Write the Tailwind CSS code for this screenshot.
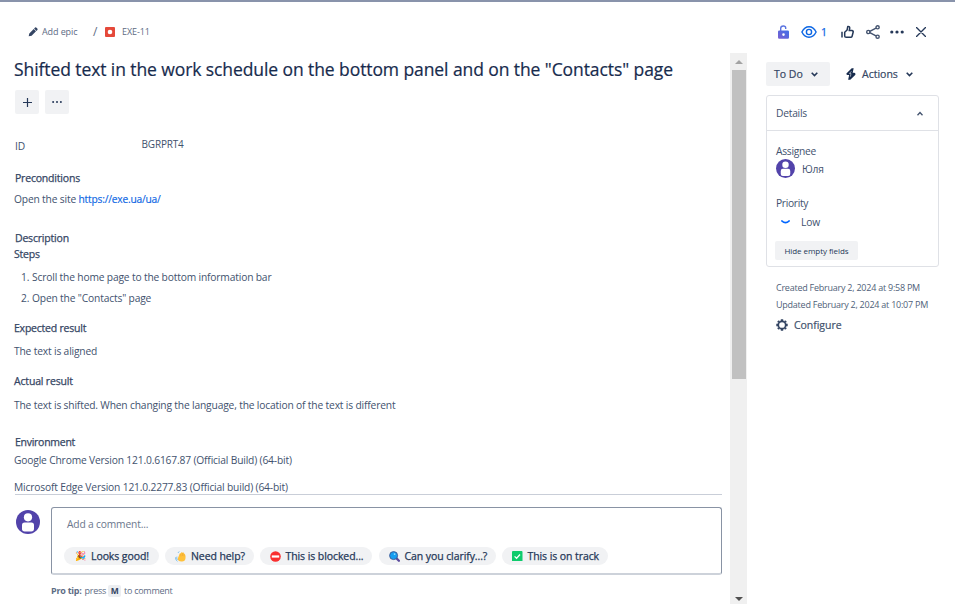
<!DOCTYPE html>
<html lang="en"><head><meta charset="utf-8"><title>EXE-11</title>
<script src="https://cdn.jsdelivr.net/npm/@tailwindcss/browser@4"></script></head>
<body class="h-[604px] w-[955px] overflow-hidden bg-white font-['Open_Sans','Noto_Sans',sans-serif] text-[10.25px] leading-4 tracking-[-0.165px] whitespace-nowrap text-[#42526e]">
<div class="flex h-[604px] border-t-2 border-[#8993ab]">
<div class="flex w-[747px] flex-col">
<header class="flex h-[51px] shrink-0 items-center pt-[9px] pl-[28px] text-[9px] tracking-[-0.1px] text-[#5e6c84]">
<svg class="mr-[4px] size-[10px] shrink-0" viewBox="0 0 10 10" fill="#344563"><path d="M.7 9.3 1.3 6.4 5.7 2 8 4.3 3.6 8.7ZM6.1 1.6 7.1.6Q7.8 0 8.5.7L9.3 1.5Q10 2.2 9.4 2.9L8.4 3.9Z"/></svg>
<span class="w-[36px]">Add epic</span>
<span class="ml-[15px] w-[5px] text-[12px]">/</span>
<svg class="mr-[7px] ml-[7px] size-[10px]" viewBox="0 0 10 10"><rect width="10" height="10" rx="1" fill="#e5493a"/><circle cx="5" cy="5" r="2.3" fill="#fff"/></svg>
<span>EXE-11</span>
</header>
<div class="flex min-h-0 flex-1 justify-between">
<main class="flex w-[722px] flex-col pl-[14px]">
<section class="h-[441px] shrink-0">
<h1 class="pt-[6px] text-[17.5px] leading-[20px] tracking-[-0.087px] text-[#172b4d] [-webkit-text-stroke:0.2px]">Shifted text in the work schedule on the bottom panel and on the "Contacts" page</h1>
<div class="mt-[11px] ml-px flex gap-[6px]">
<button class="grid size-6 place-items-center rounded-[2px] bg-[#f1f2f4]"><svg class="size-[9px]" viewBox="0 0 9 9" stroke="#253858" stroke-width="1.2"><path d="M4.5 0V9M0 4.5H9"/></svg></button>
<button class="grid size-6 place-items-center rounded-[2px] bg-[#f1f2f4]"><svg class="h-[2px] w-[10px]" viewBox="0 0 10 2" fill="#253858"><circle cx="1.1" cy="1" r="1"/><circle cx="5" cy="1" r="1"/><circle cx="8.9" cy="1" r="1"/></svg></button></div>
<dl class="mt-[22px] ml-px flex"><dt class="mt-[2px] w-[126.5px]">ID</dt><dd class="text-[10px]">BGRPRT4</dd></dl>
<h2 class="mt-[16px] ml-px text-[10.5px] tracking-[-0.195px] text-[#344563] [-webkit-text-stroke:0.25px]">Preconditions</h2>
<p class="mt-[5px]">Open the site <a class="tracking-[-0.22px] text-[#0c66e4] [-webkit-text-stroke:0.15px]">https://exe.ua/ua/</a></p>
<h2 class="mt-[23px] ml-px text-[10.5px] tracking-[-0.195px] text-[#344563] [-webkit-text-stroke:0.25px]">Description</h2>
<h2 class="text-[10.5px] tracking-[-0.195px] text-[#344563] [-webkit-text-stroke:0.25px]">Steps</h2>
<ol class="mt-[7px] ml-[7px] space-y-[5px]"><li class="flex"><span class="w-[11px]">1.</span>Scroll the home page to the bottom information bar</li><li class="flex"><span class="w-[11px]">2.</span>Open the "Contacts" page</li></ol>
<h2 class="mt-[14px] text-[10.5px] tracking-[-0.22px] text-[#344563] [-webkit-text-stroke:0.25px]">Expected result</h2>
<p class="mt-[7px]">The text is aligned</p>
<h2 class="mt-[14px] text-[10.5px] tracking-[-0.17px] text-[#344563] [-webkit-text-stroke:0.25px]">Actual result</h2>
<p class="mt-[8px]">The text is shifted. When changing the language, the location of the text is different</p>
<h2 class="mt-[21px] ml-px text-[10.5px] tracking-[-0.27px] text-[#344563] [-webkit-text-stroke:0.25px]">Environment</h2>
<p class="mt-[2px]">Google Chrome Version 121.0.6167.87 (Official Build) (64-bit)</p>
<p class="mt-[11px]">Microsoft Edge Version 121.0.2277.83 (Official build) (64-bit)</p>
</section>
<footer class="ml-px flex border-t border-[#c9ced8] pt-3 pl-px">
<svg class="mt-[3px] mr-[11px] size-6 shrink-0" viewBox="0 0 24 24"><circle cx="12" cy="12" r="12" fill="#5243aa"/><circle cx="12" cy="7.3" r="4.1" fill="#fff"/><rect x="6" y="12.4" width="12" height="9" rx="2.6" fill="#fff"/></svg>
<div class="flex-1">
<div class="h-[68px] rounded-[3px] border border-b-2 border-[#8993a4] border-b-[#cdd2da] pt-[8px] pl-[12px]">
<p class="pl-[3px] text-[#6b778c]">Add a comment...</p>
<div class="mt-[15px] flex gap-[6.5px] text-[10.5px] tracking-[-0.085px] text-[#253858] [-webkit-text-stroke:0.25px]">
<span class="flex h-[18px] w-[94.5px] items-center rounded-full bg-[#f1f2f4] pl-[11px]"><span class="w-[16px] text-[9px] tracking-normal">🎉</span>Looks good!</span>
<span class="flex h-[18px] w-[88.5px] items-center rounded-full bg-[#f1f2f4] pl-[10px]"><svg class="mr-[5px] size-[11px]" viewBox="0 0 11 11"><path d="M3.2 9.3Q1.9 7.5 3.2 6.4L4.6 2.8Q5 1.9 5.7 2.6L6.3 1.4Q7 .7 7.4 1.7L8.4 1.5Q9.2 1.6 9.1 2.6L10.2 3.7Q10.8 5 10.5 7.2 10.1 10.4 7 10.5 4.5 10.6 3.2 9.3Z" fill="#ffc13b"/><path d="M5.7 2.8 6 5.4M7.4 2 7.6 5M9 2.8 9.1 5.4" stroke="#eaa12b" stroke-width=".5" fill="none"/><path d="M.5 6.3Q.3 9.2 2.5 10.3M1.9 5.6Q1.3 7.7 2.4 8.9M4.4.5Q3.4.8 3.1 1.9" stroke="#67b5eb" stroke-width=".8" fill="none"/></svg>Need help?</span>
<span class="flex h-[18px] w-[112px] items-center rounded-full bg-[#f1f2f4] pl-[10px]"><svg class="mr-[4.5px] size-[11px]" viewBox="0 0 11 11"><circle cx="5.5" cy="5.5" r="5.3" fill="#f92f2f"/><rect x="1.8" y="4.4" width="7.4" height="2.2" fill="#fff"/></svg>This is blocked...</span>
<span class="flex h-[18px] w-[117px] items-center rounded-full bg-[#f1f2f4] pl-[10px]"><svg class="mr-[5px] size-[11px]" viewBox="0 0 11 11"><path d="M6.8 6.6 9.9 9.7" stroke="#5b4a9c" stroke-width="2.3" stroke-linecap="round"/><circle cx="4.6" cy="4.6" r="4" fill="#159df0" stroke="#3e5592" stroke-width=".9"/><circle cx="5.6" cy="3.1" r=".9" fill="#8fdcff"/></svg>Can you clarify...?</span>
<span class="flex h-[18px] w-[106px] items-center rounded-full bg-[#f1f2f4] pl-[10px]"><svg class="mr-[5px] size-[10.5px]" viewBox="0 0 11 11"><rect width="11" height="11" rx="1" fill="#0ecb6c"/><path d="M2.7 5.6 4.8 7.6 8.4 3.7" stroke="#fff" stroke-width="1.3" fill="none"/></svg>This is on track</span>
</div></div>
<p class="mt-[8px] flex text-[9px] tracking-[-0.25px] text-[#5e6c84]"><b class="mr-[3px] font-bold">Pro tip:</b>press<kbd class="mr-[3px] ml-[2px] mt-[2px] h-[12px] rounded-[2px] bg-[#eceef1] px-[2.5px] font-['Open_Sans'] text-[8.5px] leading-[12px] font-bold text-[#344563]">M</kbd>to comment</p>
</div></footer></main>
<div class="flex w-[17px] flex-col items-center justify-between bg-[#f0f0f0] pt-[7px] pb-[3px]">
<div class="flex flex-col items-center"><svg class="h-[4px] w-[8px]" viewBox="0 0 8 4" fill="#a3a3a3"><path d="M0 4 4 0 8 4Z"/></svg><div class="mt-[6px] h-[309px] w-[14px] bg-[#c1c1c1]"></div></div>
<svg class="h-[4px] w-[8px]" viewBox="0 0 8 4" fill="#505050"><path d="M0 0 4 4 8 0Z"/></svg>
</div></div></div>
<aside class="ml-[19px] w-[173px]">
<div class="flex h-[42px] items-center pt-[18px] pl-[12px]">
<svg class="h-[14px] w-[11px]" viewBox="0 0 11 14"><defs><linearGradient id="lk" x1="0" x2="1" y1="1" y2="0"><stop stop-color="#7a5fd0"/><stop offset="1" stop-color="#3f6fe8"/></linearGradient></defs><path d="M2.7 6V3.2Q2.7 1 5.3 1 7.7 1 7.7 3V4" fill="none" stroke="#5b74e0" stroke-width="1.4"/><path fill-rule="evenodd" d="M1.2 5.5H9.8Q11 5.5 11 6.7V12.5Q11 13.8 9.8 13.8H1.2Q0 13.8 0 12.5V6.7Q0 5.5 1.2 5.5ZM5.5 8.3A1.3 1.3 0 1 0 5.5 10.9 1.3 1.3 0 0 0 5.5 8.3Z" fill="url(#lk)"/></svg>
<svg class="ml-[12px] h-[12px] w-[16px]" viewBox="0 0 16 12" fill="none" stroke="#0c66e4" stroke-width="1.4"><path d="M.9 6Q3.4.8 8 .8T15.1 6Q12.6 11.2 8 11.2T.9 6Z"/><circle cx="8" cy="6" r="2.6"/></svg>
<span class="ml-[4px] w-[20px] text-[10.5px] text-[#0c66e4] [-webkit-text-stroke:0.25px]">1</span>
<svg class="h-[14px] w-[13px]" viewBox="0 0 13 14" fill="none" stroke="#253858" stroke-width="1.5" stroke-linejoin="round"><path d="M1 6.8V12.6M3.7 7.2 6.1 5 6.8 1.5Q8.9 1.2 8.7 3.3L8.2 5.6H11Q12.4 5.7 12.2 7L11.1 11.2Q10.8 12.3 9.7 12.3H5.1Q3.7 12.3 3.7 10.9Z"/></svg>
<svg class="ml-[12px] h-[14px] w-[14px]" viewBox="0 0 14 14" fill="none" stroke="#42526e" stroke-width="1.4"><circle cx="2.3" cy="7" r="1.6"/><circle cx="11.6" cy="2.3" r="1.6"/><circle cx="11.6" cy="11.7" r="1.6"/><path d="M3.8 6.3 10 3.1M3.8 7.7 10 10.9"/></svg>
<svg class="ml-[10px] h-[4px] w-[14px]" viewBox="0 0 14 4" fill="#253858"><circle cx="1.8" cy="2" r="1.6"/><circle cx="7" cy="2" r="1.6"/><circle cx="12.2" cy="2" r="1.6"/></svg>
<svg class="ml-[12px] size-[10px] shrink-0" viewBox="0 0 10 10" stroke="#253858" stroke-width="1.4" stroke-linecap="round"><path d="M.5.5 9.5 9.5M9.5.5.5 9.5"/></svg>
</div>
<div class="mt-[18px] flex items-center text-[10.5px] tracking-normal text-[#344563] [-webkit-text-stroke:0.2px]">
<button class="flex h-6 w-[64px] items-center rounded-[2px] bg-[#f1f2f4] pl-[8px]"><span class="w-[37px] text-left">To Do</span><svg class="h-[5px] w-[7px]" viewBox="0 0 7 5" fill="none" stroke="#253858" stroke-width="1.6"><path d="M.7.8 3.5 3.6 6.3.8"/></svg></button>
<svg class="ml-[16px] h-[12px] w-[10px]" viewBox="0 0 10 13" fill="#172b4d"><path d="M5.8.3 0 6Q-.1 7.7 1.5 7.7H3L1.9 12.6 4.2 12.7 9.8 7.3Q10.1 5.3 8.5 5.2H6.8L7.9.4Z"/><path d="M5.4 3.6 3.2 6H5L4.3 9.4" fill="none" stroke="#dfe1e6" stroke-width=".7"/></svg>
<span class="ml-[6px] w-[44px]">Actions</span><svg class="h-[5px] w-[7px]" viewBox="0 0 7 5" fill="none" stroke="#253858" stroke-width="1.6"><path d="M.7.8 3.5 3.6 6.3.8"/></svg>
</div>
<section class="mt-[9px] h-[172px] w-[173px] rounded-[3px] border border-[#dfe1e6]">
<div class="flex h-[35px] items-center justify-between border-b border-[#dfe1e6] pr-[15px] pl-[9px] tracking-[-0.23px]">Details<svg class="h-[5px] w-[6px]" viewBox="0 0 6 5" fill="none" stroke="#42526e" stroke-width="1.3"><path d="M.5 4.2 3 1.5 5.5 4.2"/></svg></div>
<div class="pt-[12px] pl-[9px]"><p class="tracking-[-0.27px]">Assignee</p>
<div class="flex h-[18px] items-center"><svg class="mr-[7px] size-[19px]" viewBox="0 0 24 24"><circle cx="12" cy="12" r="12" fill="#5243aa"/><circle cx="12" cy="7.3" r="4.1" fill="#fff"/><rect x="6" y="12.4" width="12" height="9" rx="2.6" fill="#fff"/></svg><span class="pt-[2px]">Юля</span></div>
<p class="mt-[18px] tracking-[-0.33px]">Priority</p>
<div class="mt-[3px] flex items-center"><svg class="mr-[11px] ml-[5px] h-[4px] w-[9px]" viewBox="0 0 9 4" fill="none" stroke="#0065ff" stroke-width="1.5" stroke-linecap="round"><path d="M.8.9Q4.5 4.4 8.2.9"/></svg><span>Low</span></div>
<button class="-ml-px mt-[11px] h-[19px] w-[83px] rounded-[2px] bg-[#f1f2f4] text-[8px] tracking-[-0.06px] text-[#253858]">Hide empty fields</button></div>
</section>
<div class="pl-[10px]">
<p class="mt-[12.5px] text-[9px] tracking-[-0.24px] text-[#505f79]">Created February 2, 2024 at 9:58 PM</p>
<p class="mt-px text-[9px] tracking-[-0.24px] text-[#505f79]">Updated February 2, 2024 at 10:07 PM</p>
<p class="mt-[4.5px] flex items-center text-[10.5px] tracking-[-0.04px] [-webkit-text-stroke:0.2px]"><svg class="mr-[6px] size-[12px]" viewBox="0 0 12 12" fill="none" stroke="#344563"><circle cx="6" cy="6" r="3.7" stroke-width="1.7"/><path d="M6 .3V2M6 10V11.7M.3 6H2M10 6H11.7M2 2 3 3M9 9 10 10M10 2 9 3M3 9 2 10" stroke-width="2.4"/></svg>Configure</p>
</div></aside>
</div>
</body></html>
